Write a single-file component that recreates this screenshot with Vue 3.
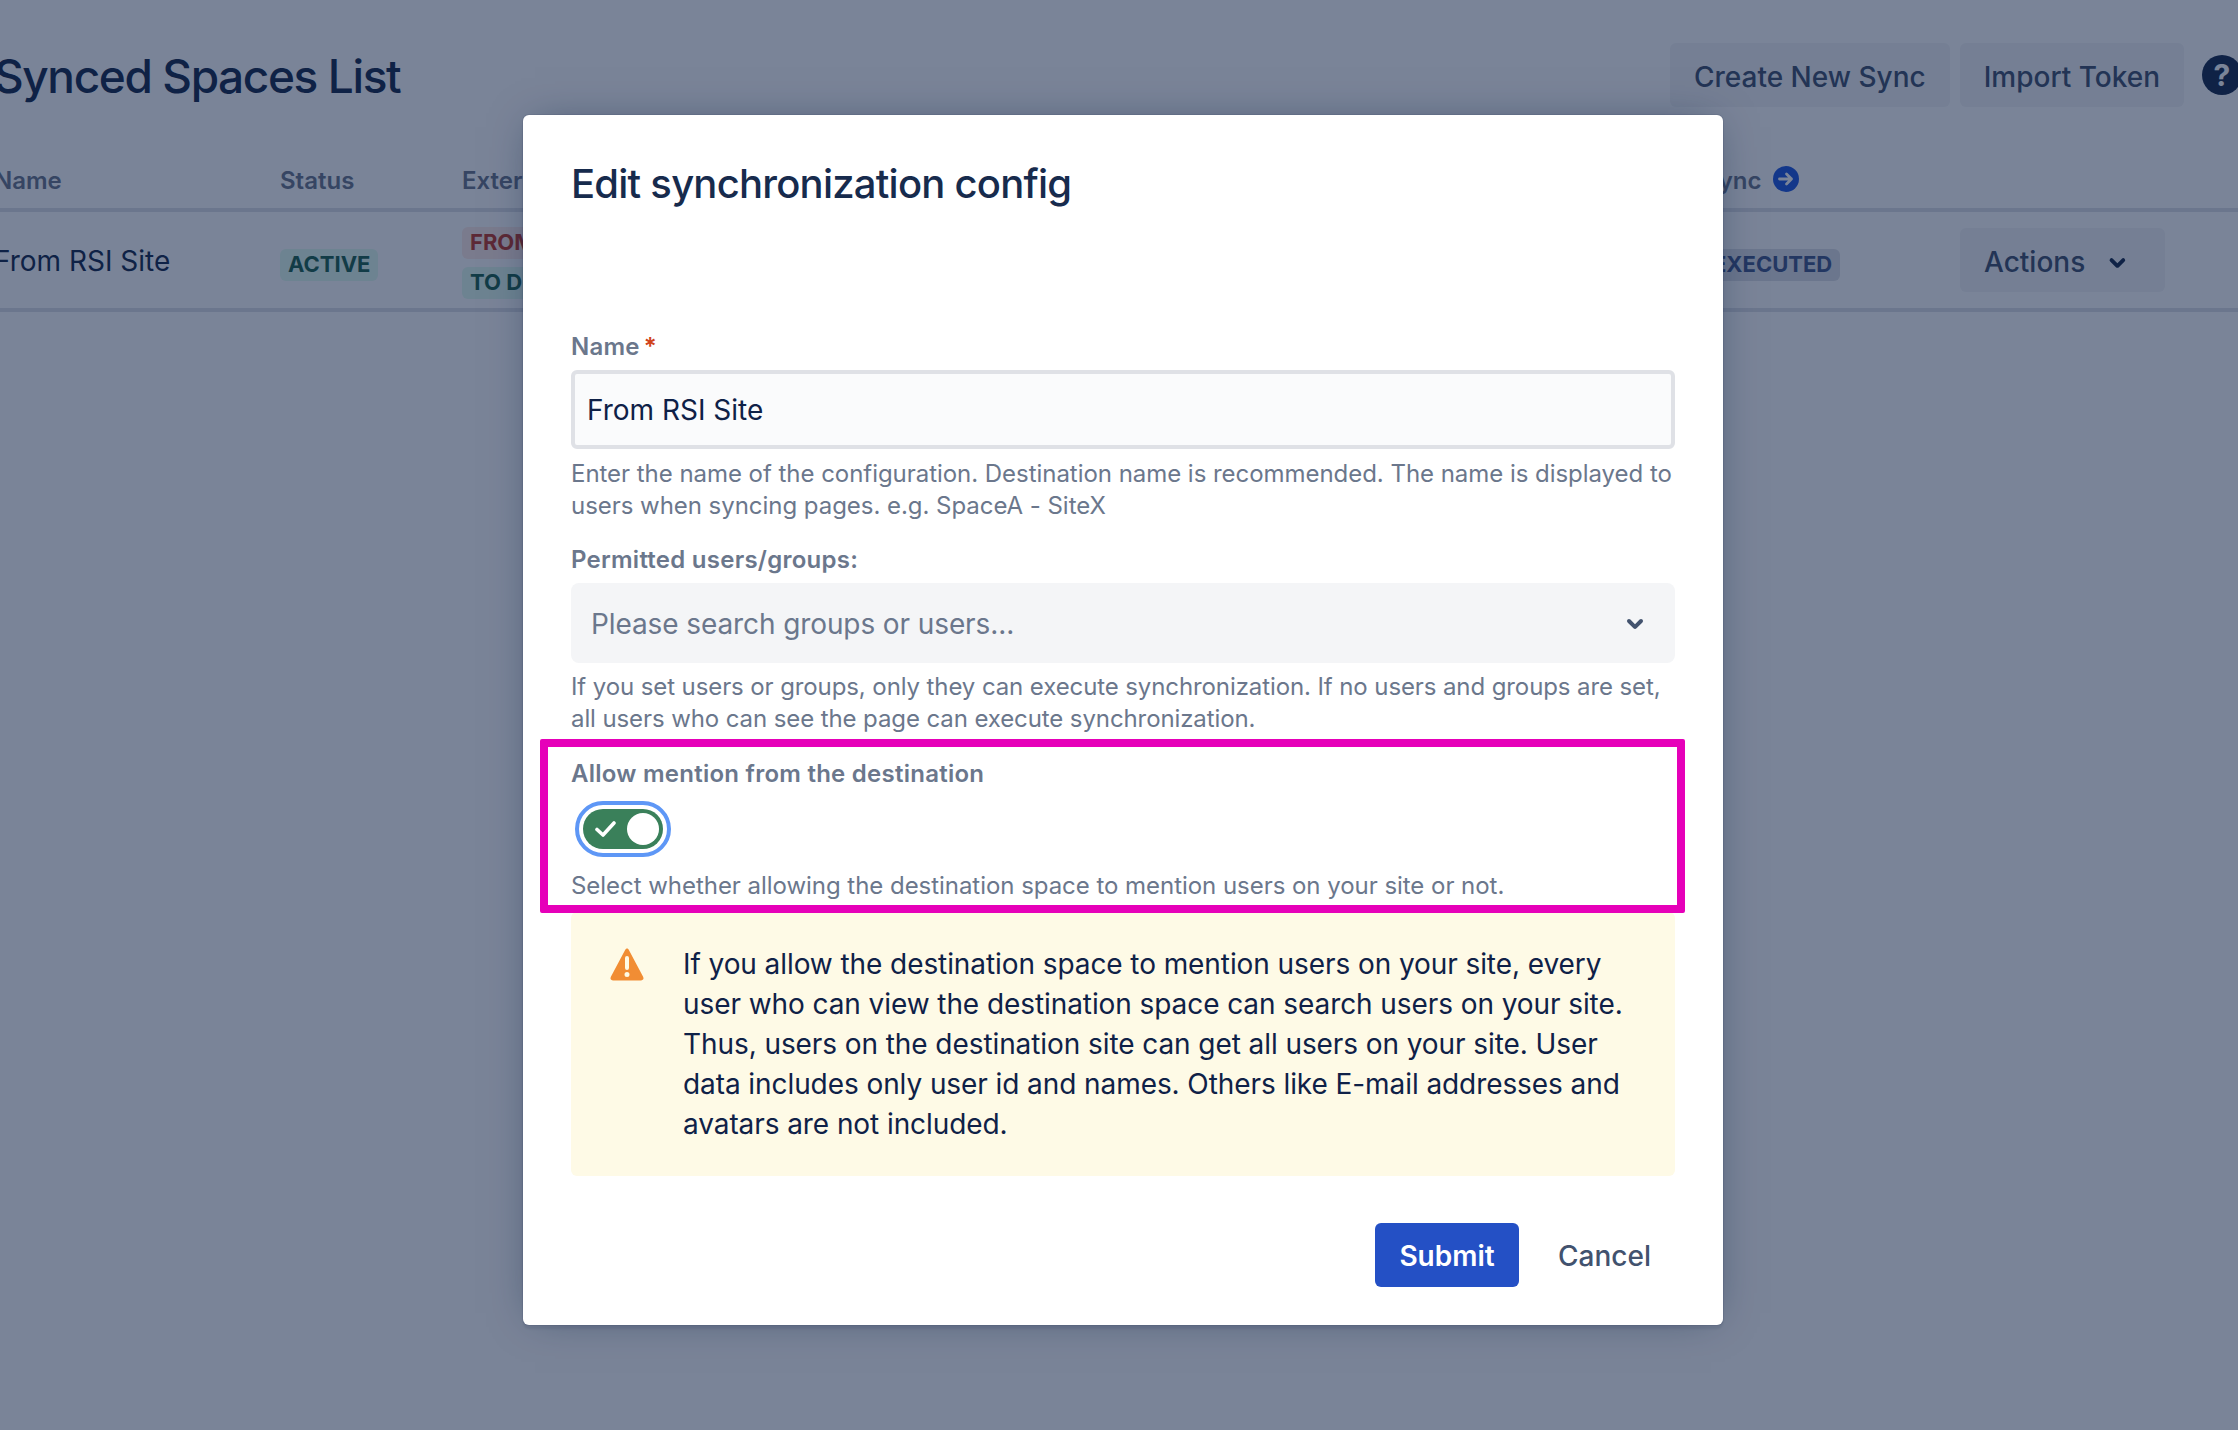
<script setup>
const warning = 'If you allow the destination space to mention users on your site, every user who can view the destination space can search users on your site. Thus, users on the destination site can get all users on your site. User data includes only user id and names. Others like E-mail addresses and avatars are not included.'
</script>

<template>
  <div class="root">
    <div class="page">
      <header class="page-head">
        <h1 class="page-title">Synced Spaces List</h1>
        <div class="head-actions">
          <button class="ghost">Create New Sync</button>
          <button class="ghost">Import Token</button>
          <span class="help">?</span>
        </div>
      </header>
      <div class="row head-row">
        <span>Name</span>
        <span>Status</span>
        <span>External Space</span>
        <span class="sync-head">
          Last Sync
          <svg class="arrow-ic" viewBox="0 0 26 26"><circle cx="13" cy="13" r="13" fill="#2058e0"/><path d="M6.500 13h12M13.500 8 18.500 13l-5 5" fill="none" stroke="#fff" stroke-width="2.800" stroke-linecap="round" stroke-linejoin="round"/></svg>
        </span>
        <span></span>
      </div>
      <div class="row body-row">
        <span class="cell-name">From RSI Site</span>
        <span class="badge-cell"><span class="badge green">Active</span></span>
        <span class="badge-cell stack">
          <span class="badge red">From destination</span>
          <span class="badge green">To destination</span>
        </span>
        <span class="badge-cell"><span class="badge grey">Not executed</span></span>
        <span>
          <button class="ghost actions">
            Actions
            <svg class="chev" viewBox="0 0 24 24"><path fill="currentColor" d="M8.292 10.293a1.009 1.009 0 000 1.419l2.939 2.965c.218.215.5.322.779.322s.556-.107.769-.322l2.93-2.955a1.01 1.01 0 000-1.419.987.987 0 00-1.406 0l-2.298 2.317-2.307-2.327a.99.99 0 00-1.406 0z"/></svg>
          </button>
        </span>
      </div>
    </div>

    <div class="blanket">
      <div class="modal">
        <h2 class="modal-title">Edit synchronization config</h2>

        <label class="label first">Name<span class="req">*</span></label>
        <div class="input">From RSI Site</div>
        <p class="help-text">Enter the name of the configuration. Destination name is recommended. The name is displayed to users when syncing pages. e.g. SpaceA - SiteX</p>

        <label class="label">Permitted users/groups:</label>
        <div class="select">
          <span>Please search groups or users...</span>
          <svg class="select-chev" viewBox="0 0 24 24"><path fill="currentColor" d="M8.292 10.293a1.009 1.009 0 000 1.419l2.939 2.965c.218.215.5.322.779.322s.556-.107.769-.322l2.93-2.955a1.01 1.01 0 000-1.419.987.987 0 00-1.406 0l-2.298 2.317-2.307-2.327a.99.99 0 00-1.406 0z"/></svg>
        </div>
        <p class="help-text after-select">If you set users or groups, only they can execute synchronization. If no users and groups are set, all users who can see the page can execute synchronization.</p>

        <section class="mention">
          <div class="highlight"></div>
          <label class="label">Allow mention from the destination</label>
          <div class="toggle-ring">
            <div class="toggle">
              <svg class="check" viewBox="0 0 22 18"><path d="M3 9.500 9 15 20 3" fill="none" stroke="#fff" stroke-width="3.600" stroke-linecap="round" stroke-linejoin="round"/></svg>
              <span class="knob"></span>
            </div>
          </div>
          <p class="help-text tight">Select whether allowing the destination space to mention users on your site or not.</p>
        </section>

        <div class="warning">
          <svg class="warn-ic" viewBox="0 0 24 24"><path fill="#f18d34" fill-rule="evenodd" d="M12.938 4.967c-.518-.978-1.36-.974-1.876 0L3.938 18.425c-.518.978-.045 1.771 1.057 1.771h14.01c1.102 0 1.573-.797 1.057-1.771L12.938 4.967zM12 15a1 1 0 01-1-1V9a1 1 0 012 0v5a1 1 0 01-1 1zm0 3.500a1.250 1.250 0 110-2.500 1.250 1.250 0 010 2.500z"/></svg>
          <p class="warn-text">{{ warning }}</p>
        </div>

        <footer class="modal-foot">
          <button class="submit">Submit</button>
          <button class="cancel">Cancel</button>
        </footer>
      </div>
    </div>
  </div>
</template>

<style scoped>
.root {
  position: relative;
  width: 2238px;
  height: 1430px;
  overflow: hidden;
  background: #fff;
  font-family: Inter, "Liberation Sans", sans-serif;
  color: #172b4d;
}
button {
  font-family: inherit;
  border: 0;
  cursor: pointer;
}
.page {
  width: 2248px;
  margin-left: -6px;
  padding-top: 43px;
}
.page-head {
  display: flex;
  justify-content: space-between;
  align-items: center;
  height: 64px;
}
.page-title {
  margin: 0;
  font-size: 46px;
  font-weight: 500;
  letter-spacing: -1.4px;
  line-height: 64px;
  padding-top: 2px;
}
.head-actions {
  display: flex;
  align-items: center;
  gap: 10px;
}
.ghost {
  height: 64px;
  padding: 3px 24px 0;
  border-radius: 6px;
  background: #f4f5f7;
  color: #42526e;
  font-size: 28px;
  font-weight: 500;
}
.help {
  width: 40px;
  height: 40px;
  margin-left: 8px;
  border-radius: 50%;
  background: #172b4d;
  color: #fff;
  font-size: 30px;
  font-weight: 700;
  line-height: 40px;
  text-align: center;
}
.row {
  display: grid;
  grid-template-columns: 286px 182px 1190px 308px 282px;
}
.head-row {
  padding: 58px 0 11px;
  border-bottom: 4px solid #dfe1e6;
  color: #6b778c;
  font-size: 24px;
  font-weight: 600;
  line-height: 32px;
}
.sync-head {
  display: flex;
  align-items: center;
  gap: 12px;
  margin-left: -4px;
}
.arrow-ic {
  width: 26px;
  height: 26px;
  margin-top: -4px;
}
.body-row {
  height: 96px;
  align-items: center;
  border-bottom: 4px solid #dfe1e6;
  font-size: 28px;
  line-height: 40px;
}
.cell-name {
  margin-top: 2px;
}
.badge-cell {
  margin-top: 6px;
}
.stack {
  display: flex;
  flex-direction: column;
  align-items: flex-start;
  gap: 8px;
}
.badge {
  display: inline-block;
  padding: 0 8px 2px;
  border-radius: 6px;
  font-size: 22px;
  font-weight: 700;
  line-height: 30px;
  text-transform: uppercase;
  vertical-align: middle;
}
.green { background: #e3fcef; color: #1d6350; }
.red { background: #ffebe6; color: #c03a2a; }
.grey { background: #dfe1e6; color: #42588a; }
.actions {
  display: flex;
  align-items: center;
  gap: 9px;
  width: 205px;
}
.chev {
  width: 48px;
  height: 48px;
  color: #172b4d;
}

.blanket {
  position: absolute;
  inset: 0;
  display: flex;
  align-items: flex-start;
  padding: 115px 0 0 523px;
  background: rgba(10, 28, 64, 0.54);
}
.modal {
  width: 1200px;
  height: 1210px;
  padding: 41px 48px 0;
  box-sizing: border-box;
  background: #fff;
  border-radius: 6px;
  box-shadow: 0 0 0 1px rgba(9, 30, 66, 0.08), 0 4px 2px rgba(9, 30, 66, 0.08), 0 0 40px -12px rgba(9, 30, 66, 0.5);
}
.modal-title {
  margin: 0;
  font-size: 40px;
  font-weight: 500;
  letter-spacing: -0.77px;
  line-height: 56px;
}
.label {
  display: block;
  margin-top: 21px;
  padding-top: 1px;
  margin-bottom: -1px;
  color: #6b778c;
  font-size: 24px;
  font-weight: 600;
  letter-spacing: 0.25px;
  line-height: 32px;
}
.label.first {
  margin-top: 118px;
}
.req {
  margin-left: 4px;
  color: #d0431b;
}
.input {
  display: flex;
  align-items: center;
  height: 79px;
  margin-top: 8px;
  padding: 0 12px;
  box-sizing: border-box;
  border: 4px solid #dfe1e6;
  border-radius: 6px;
  background: #fafbfc;
  color: #0f2147;
  font-size: 28px;
}
.help-text {
  margin: 9px 0 0;
  color: #6b778c;
  font-size: 24px;
  letter-spacing: -0.04px;
  line-height: 32px;
}
.help-text.after-select {
  margin-top: 8px;
  letter-spacing: -0.1px;
}
.select {
  display: flex;
  align-items: center;
  justify-content: space-between;
  height: 80px;
  margin-top: 8px;
  padding: 0 16px 0 20px;
  box-sizing: border-box;
  border-radius: 8px;
  background: #f4f5f7;
  color: #6b778c;
  font-size: 28px;
  letter-spacing: -0.1px;
}
.select span {
  padding-top: 2px;
}
.select-chev {
  width: 48px;
  height: 48px;
  color: #42526e;
}
.mention {
  position: relative;
  margin-top: 22px;
}
.mention .label {
  margin-top: 0;
}
.highlight {
  position: absolute;
  top: -18px;
  left: -31px;
  right: -10px;
  height: 174px;
  box-sizing: border-box;
  border: 8px solid #e600b9;
  border-radius: 2px;
  pointer-events: none;
}
.toggle-ring {
  display: inline-flex;
  width: 96px;
  height: 56px;
  margin: 12px 0 0 4px;
  padding: 4px;
  box-sizing: border-box;
  border: 4px solid #5e97f6;
  border-radius: 28px;
  vertical-align: top;
}
.toggle {
  display: flex;
  align-items: center;
  justify-content: space-between;
  width: 80px;
  height: 40px;
  padding: 0 4px 0 11px;
  box-sizing: border-box;
  border-radius: 20px;
  background: #3a805a;
}
.check {
  width: 22px;
  height: 18px;
}
.knob {
  width: 32px;
  height: 32px;
  border-radius: 50%;
  background: #fff;
}
.help-text.tight {
  margin-top: 13px;
}
.warning {
  display: flex;
  gap: 32px;
  margin-top: 10px;
  padding: 32px;
  border-radius: 6px;
  background: #fefae6;
}
.warn-ic {
  flex: none;
  width: 48px;
  height: 48px;
  margin-top: -4px;
}
.warn-text {
  margin: 0;
  color: #0f2147;
  font-size: 28px;
  letter-spacing: -0.08px;
  line-height: 40px;
}
.modal-foot {
  display: flex;
  justify-content: flex-end;
  align-items: center;
  gap: 15px;
  margin-top: 47px;
}
.submit {
  width: 144px;
  height: 64px;
  padding-top: 2px;
  border-radius: 6px;
  background: #2450c5;
  color: #fff;
  font-size: 28px;
  font-weight: 600;
}
.cancel {
  height: 64px;
  padding: 2px 24px 0;
  background: transparent;
  color: #42526e;
  font-size: 28px;
  font-weight: 500;
}
</style>
